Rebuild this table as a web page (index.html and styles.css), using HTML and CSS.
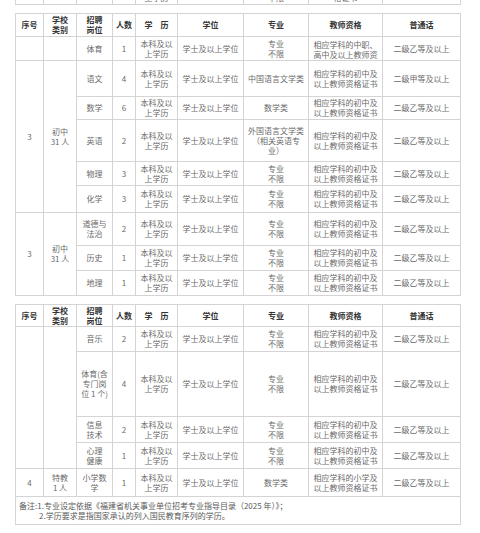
FILE: index.html
```html
<!DOCTYPE html>
<html lang="zh">
<head>
<meta charset="utf-8">
<link rel="stylesheet" href="styles.css">
</head>
<body>
<div class="page">
  <div class="frag">
    <table class="tbl">
      <colgroup><col class="c1"><col class="c2"><col class="c3"><col class="c4"><col class="c5"><col class="c6"><col class="c7"><col class="c8"><col class="c9"></colgroup>
      <tr class="h-frag"><td></td><td></td><td></td><td></td><td>本科及以<br>上学历</td><td></td><td>专业<br>不限</td><td>以上教师资<br>格证书</td><td></td></tr>
    </table>
  </div>

  <table class="tbl t1">
    <colgroup><col class="c1"><col class="c2"><col class="c3"><col class="c4"><col class="c5"><col class="c6"><col class="c7"><col class="c8"><col class="c9"></colgroup>
    <tr class="head" style="height:23px"><th>序号</th><th>学校<br>类别</th><th>招聘<br>岗位</th><th>人数</th><th>学　历</th><th>学位</th><th>专业</th><th>教师资格</th><th>普通话</th></tr>
    <tr style="height:24px"><td></td><td></td><td>体育</td><td>1</td><td>本科及以<br>上学历</td><td>学士及以上学位</td><td>专业<br>不限</td><td><div class="clip">相应学科的中职、<br>高中及以上教师资<br>格证书</div></td><td>二级乙等及以上</td></tr>
    <tr style="height:36px"><td rowspan="5">3</td><td rowspan="5">初中<br>31 人</td><td>语文</td><td>4</td><td>本科及以<br>上学历</td><td>学士及以上学位</td><td>中国语言文学类</td><td>相应学科的初中及<br>以上教师资格证书</td><td>二级甲等及以上</td></tr>
    <tr style="height:23px"><td>数学</td><td>6</td><td>本科及以<br>上学历</td><td>学士及以上学位</td><td>数学类</td><td>相应学科的初中及<br>以上教师资格证书</td><td>二级乙等及以上</td></tr>
    <tr style="height:42px"><td>英语</td><td>2</td><td>本科及以<br>上学历</td><td>学士及以上学位</td><td>外国语言文学类<br>（相关英语专<br>业）</td><td>相应学科的初中及<br>以上教师资格证书</td><td>二级乙等及以上</td></tr>
    <tr style="height:24px"><td>物理</td><td>3</td><td>本科及以<br>上学历</td><td>学士及以上学位</td><td>专业<br>不限</td><td>相应学科的初中及<br>以上教师资格证书</td><td>二级乙等及以上</td></tr>
    <tr style="height:27px"><td>化学</td><td>3</td><td>本科及以<br>上学历</td><td>学士及以上学位</td><td>专业<br>不限</td><td>相应学科的初中及<br>以上教师资格证书</td><td>二级乙等及以上</td></tr>
    <tr style="height:33px"><td rowspan="3">3</td><td rowspan="3">初中<br>31 人</td><td>道德与<br>法治</td><td>2</td><td>本科及以<br>上学历</td><td>学士及以上学位</td><td>专业<br>不限</td><td>相应学科的初中及<br>以上教师资格证书</td><td>二级乙等及以上</td></tr>
    <tr style="height:25px"><td>历史</td><td>1</td><td>本科及以<br>上学历</td><td>学士及以上学位</td><td>专业<br>不限</td><td>相应学科的初中及<br>以上教师资格证书</td><td>二级乙等及以上</td></tr>
    <tr style="height:25px"><td>地理</td><td>1</td><td>本科及以<br>上学历</td><td>学士及以上学位</td><td>专业<br>不限</td><td>相应学科的初中及<br>以上教师资格证书</td><td>二级乙等及以上</td></tr>
  </table>

  <table class="tbl t2">
    <colgroup><col class="c1"><col class="c2"><col class="c3"><col class="c4"><col class="c5"><col class="c6"><col class="c7"><col class="c8"><col class="c9"></colgroup>
    <tr class="head" style="height:22px"><th>序号</th><th>学校<br>类别</th><th>招聘<br>岗位</th><th>人数</th><th>学　历</th><th>学位</th><th>专业</th><th>教师资格</th><th>普通话</th></tr>
    <tr style="height:25px"><td rowspan="4"></td><td rowspan="4"></td><td>音乐</td><td>2</td><td>本科及以<br>上学历</td><td>学士及以上学位</td><td>专业<br>不限</td><td>相应学科的初中及<br>以上教师资格证书</td><td>二级乙等及以上</td></tr>
    <tr style="height:65px"><td>体育(含<br>专门岗<br>位 1 个)</td><td>4</td><td>本科及以<br>上学历</td><td>学士及以上学位</td><td>专业<br>不限</td><td>相应学科的初中及<br>以上教师资格证书</td><td>二级乙等及以上</td></tr>
    <tr style="height:26px"><td>信息<br>技术</td><td>2</td><td>本科及以<br>上学历</td><td>学士及以上学位</td><td>专业<br>不限</td><td>相应学科的初中及<br>以上教师资格证书</td><td>二级乙等及以上</td></tr>
    <tr style="height:26px"><td>心理<br>健康</td><td>1</td><td>本科及以<br>上学历</td><td>学士及以上学位</td><td>专业<br>不限</td><td>相应学科的初中及<br>以上教师资格证书</td><td>二级乙等及以上</td></tr>
    <tr style="height:28px"><td>4</td><td>特教<br>1 人</td><td>小学数<br>学</td><td>1</td><td>本科及以<br>上学历</td><td>学士及以上学位</td><td>数学类</td><td>相应学科的小学及<br>以上教师资格证书</td><td>二级乙等及以上</td></tr>
    <tr style="height:28px"><td colspan="9" class="note"><div>备注:1.专业设定依据《福建省机关事业单位招考专业指导目录（2025 年）》；</div><div class="indent">2.学历要求是指国家承认的列入国民教育序列的学历。</div></td></tr>
  </table>
</div>
</body>
</html>
```

FILE: styles.css
```css
html, body {
  margin: 0;
  padding: 0;
  background: #ffffff;
}
.page {
  width: 480px;
  height: 533px;
  overflow: hidden;
  padding-left: 15px;
  box-sizing: border-box;
  font-family: "Noto Sans CJK SC", "Noto Sans", sans-serif;
  font-size: 8px;
  line-height: 10px;
  color: #6a6a6a;
}
.frag {
  height: 5px;
  overflow: hidden;
  display: flex;
  flex-direction: column;
  justify-content: flex-end;
  margin-bottom: 8px;
}
.tbl {
  border-collapse: collapse;
  table-layout: fixed;
  width: 445px;
}
.c1 { width: 28px; }
.c2 { width: 33px; }
.c3 { width: 36px; }
.c4 { width: 23px; }
.c5 { width: 42px; }
.c6 { width: 66px; }
.c7 { width: 65px; }
.c8 { width: 74px; }
.c9 { width: 78px; }
.tbl td, .tbl th {
  border: 1px solid #d4d4d4;
  padding: 0 1px;
  text-align: center;
  vertical-align: middle;
  font-weight: normal;
  white-space: nowrap;
}
.tbl th {
  color: #333333;
  font-weight: bold;
}
.h-frag { height: 24px; }
.t1 { margin-bottom: 8px; }
.clip {
  height: 22px;
  overflow: hidden;
  padding-top: 2px;
  box-sizing: border-box;
}
.note {
  text-align: left !important;
  padding-left: 3px !important;
  color: #5a5a5a;
}
.indent { padding-left: 20px; }
```
